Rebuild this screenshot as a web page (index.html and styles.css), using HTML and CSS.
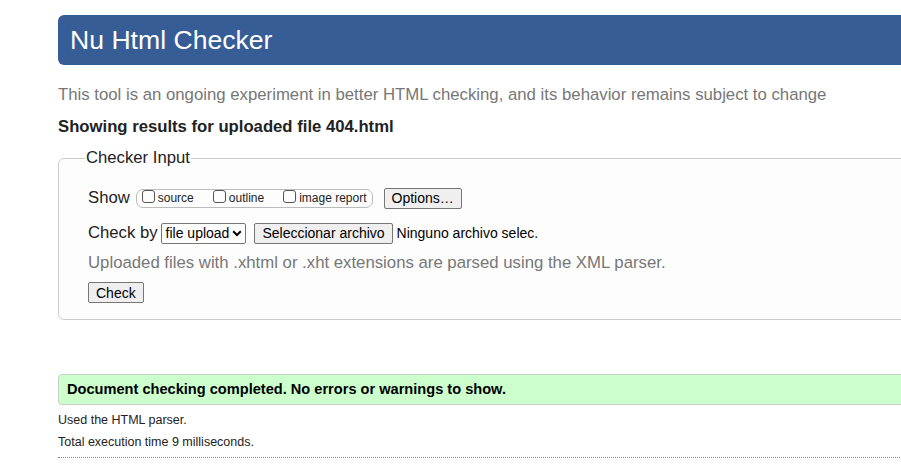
FILE: index.html
```html
<!DOCTYPE html>
<html lang="en">
<head>
<meta charset="utf-8">
<title>Nu Html Checker</title>
<link rel="stylesheet" href="styles.css">
</head>
<body>
<div class="page">
  <h1 class="title">Nu Html Checker</h1>
  <p class="lead">This tool is an ongoing experiment in better HTML checking, and its behavior remains subject to change</p>
  <p class="results-for">Showing results for uploaded file 404.html</p>
  <fieldset class="checker">
    <legend class="legend">Checker Input</legend>
    <div class="row row-show">
      <span class="label">Show</span>
      <span class="opts">
        <label class="opt"><span class="cb"></span>source</label>
        <label class="opt"><span class="cb"></span>outline</label>
        <label class="opt"><span class="cb"></span>image report</label>
      </span>
      <button class="btn btn-options">Options…</button>
    </div>
    <div class="row row-check">
      <span class="label">Check by</span>
      <span class="select">file upload<svg class="chev" viewBox="0 0 10 7" width="10" height="7"><path d="M1.2 1.2 L5 5 L8.8 1.2" fill="none" stroke="#000" stroke-width="2"/></svg></span>
      <button class="btn btn-file">Seleccionar archivo</button>
      <span class="nofile">Ninguno archivo selec.</span>
    </div>
    <p class="hint">Uploaded files with .xhtml or .xht extensions are parsed using the XML parser.</p>
    <button class="btn btn-check">Check</button>
  </fieldset>
  <p class="success">Document checking completed. No errors or warnings to show.</p>
  <p class="meta">Used the HTML parser.</p>
  <p class="meta">Total execution time 9 milliseconds.</p>
  <hr class="rule">
</div>
</body>
</html>
```
FILE: styles.css
```css
html, body {
  margin: 0;
  padding: 0;
  overflow: hidden;
  background: #fff;
}
body {
  font-family: "Liberation Sans", Arial, sans-serif;
  color: #000;
}
.page {
  width: 1000px;
  padding: 15px 0 0 58px;
}
.title {
  margin: 0;
  height: 50px;
  line-height: 51px;
  padding: 0 12px;
  background: #365d95;
  color: #fff;
  font-weight: normal;
  font-size: 26.6px;
  border-radius: 6px;
}
.lead {
  margin: 19px 0 0;
  font-size: 16.75px;
  line-height: 22px;
  color: #777;
}
.results-for {
  margin: 10px 0 0;
  font-size: 16.7px;
  line-height: 22px;
  font-weight: bold;
  color: #222;
}
.checker {
  margin: 10px 0 0;
  padding: 18px 29px 16px;
  border: 1px solid #ccc;
  border-radius: 6px;
  background: #fdfdfd;
}
.legend {
  padding: 0 1px;
  margin-left: -3px;
  font-size: 16.7px;
  color: #222;
}
.row {
  display: flex;
  align-items: center;
  font-size: 16.7px;
  color: #222;
}
.row-show { height: 24px; }
.row-check { height: 24px; margin-top: 11px; }
.label { margin-right: 6px; }
.row-check .label { margin-right: 3px; }
.opts {
  display: inline-flex;
  align-items: center;
  height: 17px;
  border: 1px solid #bbb;
  border-radius: 7px;
  padding: 0 5px 0 5px;
  font-size: 12px;
  color: #222;
}
.opt {
  display: inline-flex;
  align-items: center;
  margin-right: 19px;
}
.opt:last-child { margin-right: 0; }
.cb {
  width: 11px;
  height: 11px;
  border: 1px solid #555;
  border-radius: 3px;
  margin-right: 3px;
  position: relative;
  top: -2px;
}
.btn {
  font-family: "Liberation Sans", Arial, sans-serif;
  background: #efefef;
  border: 1px solid #767676;
  border-radius: 2px;
  color: #000;
  font-size: 14px;
  padding: 0 7px;
  height: 21px;
}
.btn-options { margin-left: 11px; }
.select {
  display: inline-flex;
  align-items: center;
  height: 19px;
  border: 1px solid #767676;
  border-radius: 2px;
  padding: 0 3px 0 4px;
  font-size: 14px;
  background: #fff;
  color: #000;
}
.chev { margin-left: 3px; }
.btn-file { margin-left: 8px; padding: 0 7px; }
.nofile { margin-left: 4px; font-size: 14px; color: #000; }
.hint {
  margin: 7px 0 0;
  font-size: 16.75px;
  line-height: 22px;
  color: #777;
}
.btn-check { margin-top: 8px; display: block; }
.success {
  margin: 54px 0 0;
  height: 29px;
  line-height: 29px;
  padding: 0 8px;
  border: 1px solid #ccc;
  border-radius: 4px 0 0 4px;
  background: #ccffcc;
  font-size: 14.6px;
  font-weight: bold;
  color: #000;
}
.meta {
  margin: 8px 0 0;
  font-size: 12.5px;
  line-height: 14px;
  color: #222;
}
.meta + .meta { margin-top: 8px; }
.rule {
  margin: 8px 0 0;
  border: 0;
  border-top: 1px dotted #888;
}
```
